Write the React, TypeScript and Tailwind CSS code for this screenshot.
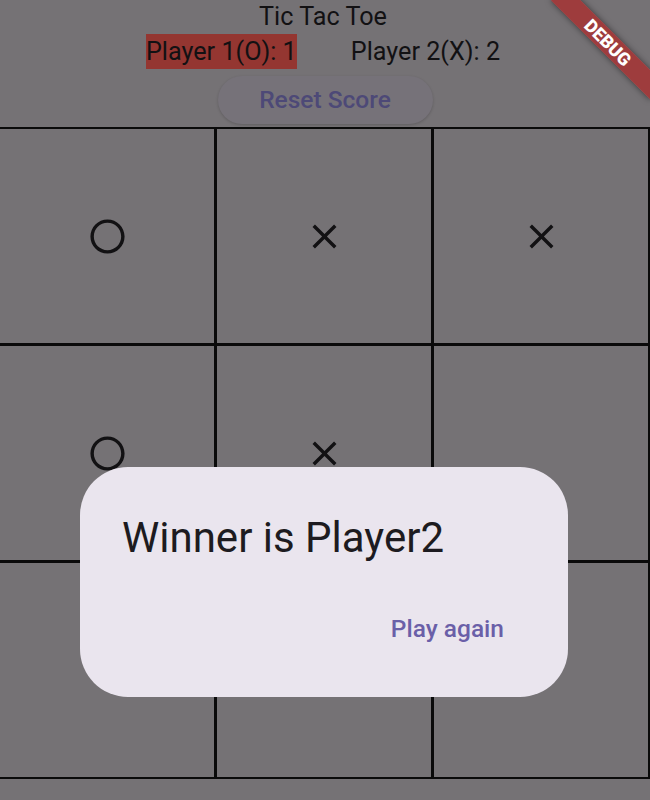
import React from "react";

const CircleIcon = () => (
  <svg width="41" height="41" viewBox="0 0 24 24" fill="#121113">
    <path d="M12 2C6.47 2 2 6.47 2 12s4.47 10 10 10 10-4.47 10-10S17.53 2 12 2zm0 18c-4.42 0-8-3.58-8-8s3.58-8 8-8 8 3.58 8 8-3.58 8-8 8z" />
  </svg>
);

const CloseIcon = () => (
  <svg width="41" height="41" viewBox="0 0 24 24" fill="#121113">
    <path d="M19 6.41L17.59 5 12 10.59 6.41 5 5 6.41 10.59 12 5 17.59 6.41 19 12 13.41 17.59 19 19 17.59 13.41 12z" />
  </svg>
);

const board: (null | "O" | "X")[] = ["O", "X", "X", "O", "X", null, "X", null, null];

export default function App() {
  return (
    <div className="relative w-[650px] h-[800px] overflow-hidden bg-[#757275] font-['Roboto',sans-serif]">
      <div className="pr-[4px] text-center text-[25.2px] leading-[34px] text-[#121113]">Tic Tac Toe</div>
      <div className="pr-[4px] flex justify-center items-center gap-[54px] h-[35px] text-[25.2px] text-[#121113]">
        <span className="bg-[#943631] leading-[35px]">Player 1(O): 1</span>
        <span className="leading-[35px]">Player 2(X): 2</span>
      </div>
      <div className="mt-[7px] mx-auto w-[215px] h-[48px] rounded-full bg-[#767279] shadow-[0_1px_3px_rgba(0,0,0,0.18)] flex items-center justify-center text-[24.5px] font-medium text-[#4d4977]">
        Reset Score
      </div>
      <div className="mt-[3px] w-[650px] bg-[#0a0a0a] pt-[2px] pr-[2px] pb-[2px] grid grid-cols-3 gap-[3px]">
        {board.map((c, i) => (
          <div key={i} className="h-[214px] bg-[#757275] flex items-center justify-center">
            {c === "O" ? <CircleIcon /> : c === "X" ? <CloseIcon /> : null}
          </div>
        ))}
      </div>

      <div className="absolute left-[80px] top-[467px] w-[488px] h-[230px] rounded-[48px] bg-[#EAE5EE]">
        <div className="pl-[42px] pt-[43px] text-[42px] leading-[56px] text-[#1D1B20]">Winner is Player2</div>
        <div className="mt-[45px] flex justify-end pr-[64px] text-[24.5px] leading-[36px] font-medium text-[#6a5fa8]">
          Play again
        </div>
      </div>

      <div className="absolute left-[538px] top-[31.5px] w-[140px] h-[21px] rotate-45 bg-[#B71C1CA0] shadow-[0_0_6px_rgba(0,0,0,0.5)] flex items-center justify-center text-[18px] leading-[18px] font-black text-white tracking-normal">
        DEBUG
      </div>
    </div>
  );
}
